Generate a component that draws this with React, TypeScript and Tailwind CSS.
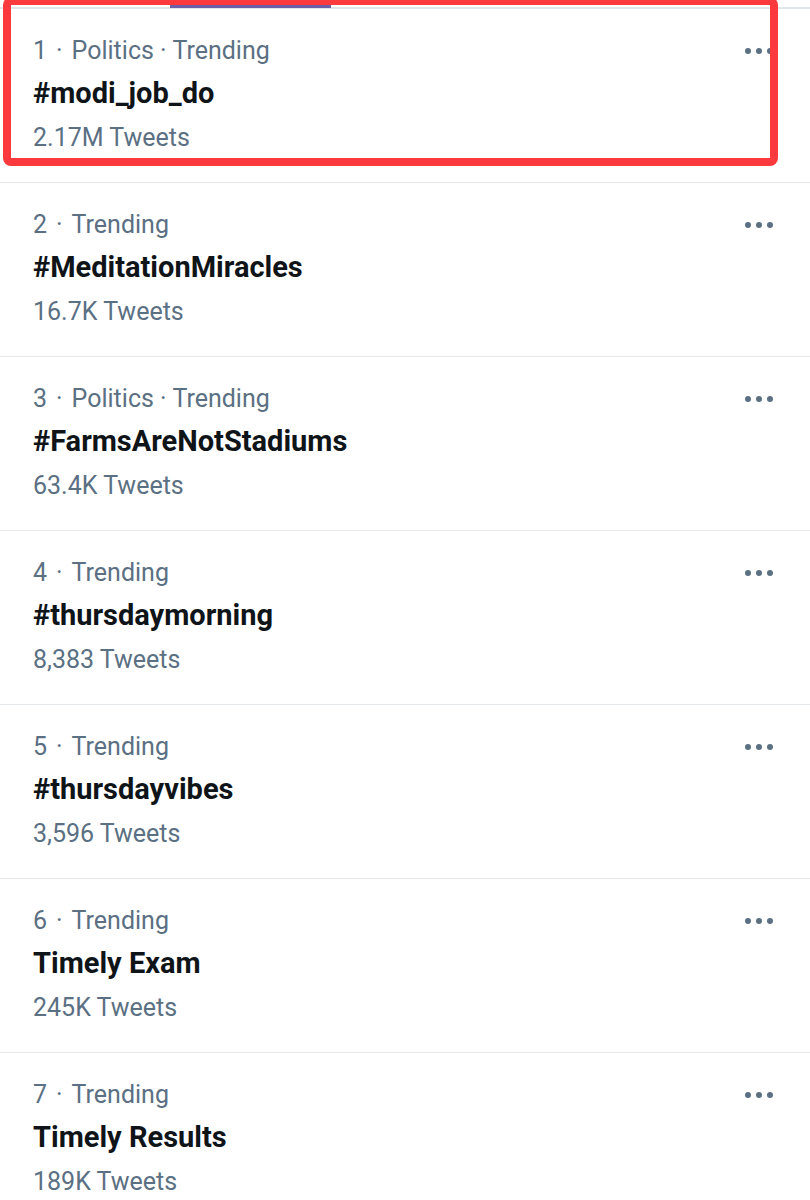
import React from 'react';

const trends = [
  { rank: 1, category: ['Politics', 'Trending'], title: '#modi_job_do', count: '2.17M Tweets' },
  { rank: 2, category: ['Trending'], title: '#MeditationMiracles', count: '16.7K Tweets' },
  { rank: 3, category: ['Politics', 'Trending'], title: '#FarmsAreNotStadiums', count: '63.4K Tweets' },
  { rank: 4, category: ['Trending'], title: '#thursdaymorning', count: '8,383 Tweets' },
  { rank: 5, category: ['Trending'], title: '#thursdayvibes', count: '3,596 Tweets' },
  { rank: 6, category: ['Trending'], title: 'Timely Exam', count: '245K Tweets' },
  { rank: 7, category: ['Trending'], title: 'Timely Results', count: '189K Tweets' },
];

function MoreDots() {
  return (
    <div className="flex items-center gap-[5px]">
      <span className="w-[6px] h-[6px] rounded-full bg-[#5b7083]" />
      <span className="w-[6px] h-[6px] rounded-full bg-[#5b7083]" />
      <span className="w-[6px] h-[6px] rounded-full bg-[#5b7083]" />
    </div>
  );
}

export default function App() {
  return (
    <div className="relative w-[810px] h-[1200px] overflow-hidden bg-white" style={{ fontFamily: 'Roboto, "Noto Sans", sans-serif' }}>
      {/* tab header strip */}
      <div className="h-[9px] border-b-2 border-[#e1e6ea] flex">
        <div className="ml-[170px] mt-[5px] w-[161px] h-[3px] bg-[#6d5fa6]" />
      </div>

      {trends.map((t) => (
        <div key={t.rank} className="relative h-[174px] border-b border-[#e6e9ec] pl-[33px] pr-[37px] pt-[27px]">
          <div className="flex items-center justify-between">
            <div className="flex text-[25px] leading-[30px] text-[#5b7083]">
              <span>{t.rank}</span>
              <span className="mx-[9px]">·</span>
              <span>{t.category[0]}</span>
              {t.category.length > 1 && (
                <>
                  <span className="mx-[6px]">·</span>
                  <span>{t.category[1]}</span>
                </>
              )}
            </div>
            <MoreDots />
          </div>
          <div className="mt-[9px] text-[29px] leading-[36px] font-bold text-[#0f1419]">{t.title}</div>
          <div className="mt-[12px] text-[25px] leading-[30px] text-[#5b7083]">{t.count}</div>
        </div>
      ))}

      {/* annotation highlight around the first trend */}
      <div className="absolute left-[3px] top-[-3px] w-[775px] h-[169px] border-[8px] border-[#fc3a3d] rounded-[8px]" />
    </div>
  );
}
